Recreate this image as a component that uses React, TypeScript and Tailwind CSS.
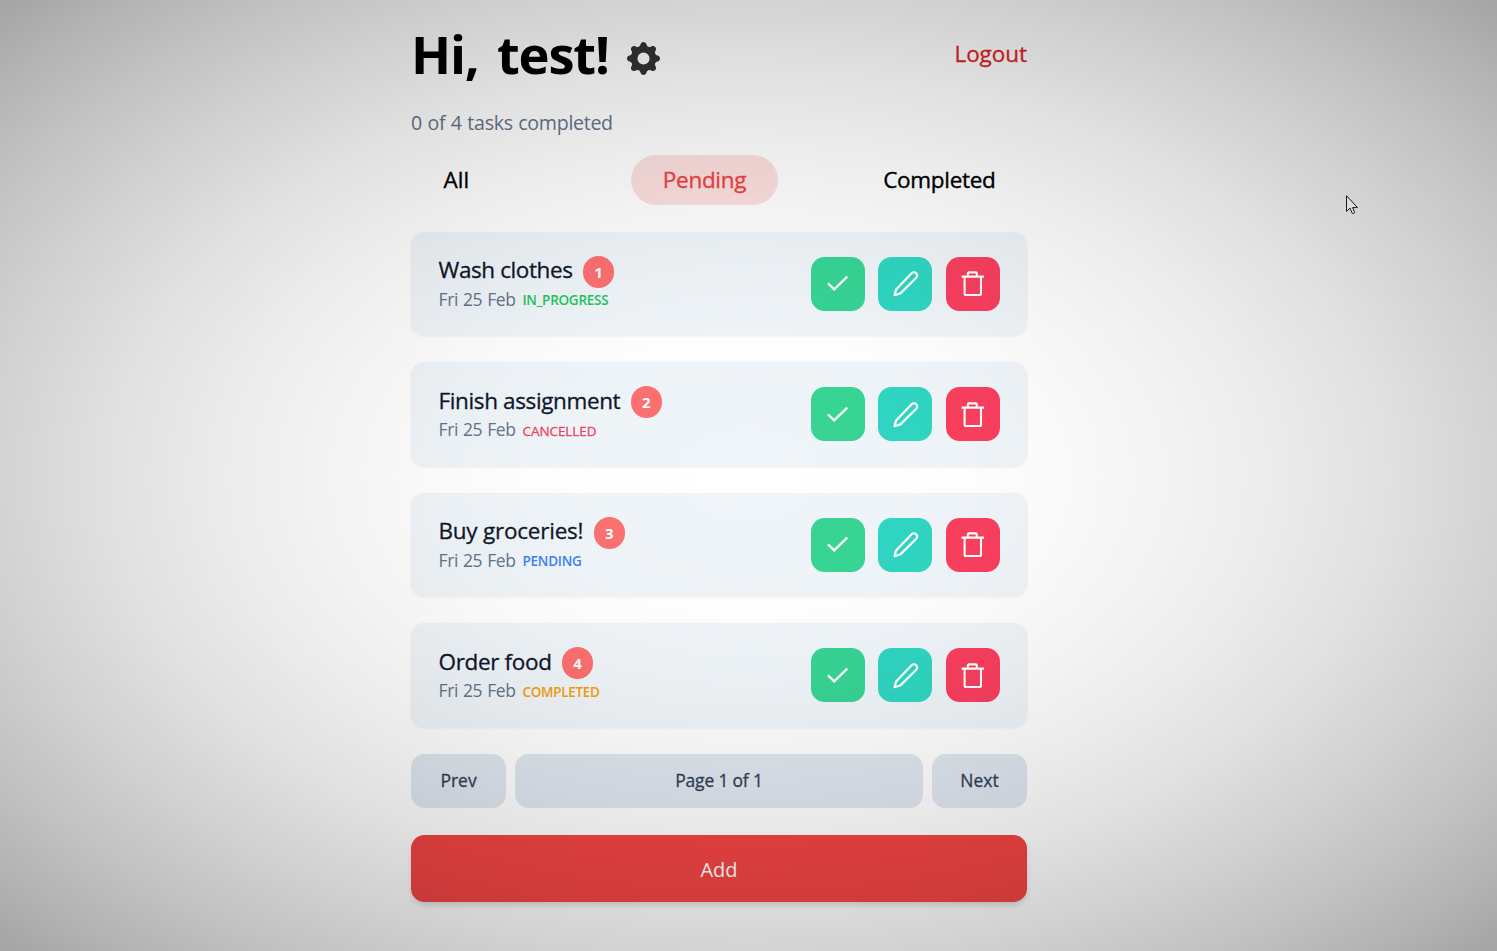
import { BsGearFill } from "react-icons/bs";

type Task = {
  title: string;
  titleClass: string;
  priority: number;
  status: string;
  statusClass: string;
};

const tasks: Task[] = [
  {
    title: "Wash clothes",
    titleClass: "tracking-[-0.4px]",
    priority: 1,
    status: "IN_PROGRESS",
    statusClass: "font-semibold tracking-[-0.27px] text-[#22c55e]",
  },
  {
    title: "Finish assignment",
    titleClass: "tracking-[-0.37px]",
    priority: 2,
    status: "CANCELLED",
    statusClass: "font-medium tracking-[-0.08px] text-[#f43f5e] [-webkit-text-stroke:0.3px]",
  },
  {
    title: "Buy groceries!",
    titleClass: "tracking-[-0.23px]",
    priority: 3,
    status: "PENDING",
    statusClass: "font-semibold tracking-[-0.25px] text-[#3b82f6]",
  },
  {
    title: "Order food",
    titleClass: "tracking-[-0.35px]",
    priority: 4,
    status: "COMPLETED",
    statusClass: "font-semibold tracking-[-0.3px] text-[#f59e0b]",
  },
];

function CheckIcon() {
  return (
    <svg viewBox="0 0 27 27" className="h-[27px] w-[27px]" fill="none" stroke="currentColor" strokeWidth="2.3">
      <path d="M3 13.3 9.2 19.3 22.2 6.7" />
    </svg>
  );
}

function PencilIcon() {
  return (
    <svg viewBox="0 0 27 27" className="h-[27px] w-[27px]" fill="none" stroke="currentColor" strokeWidth="2.2" strokeLinejoin="round">
      <path d="M2.5 25.2 4.1 19.4 19.6 3.2a3.2 3.2 0 0 1 4.6 4.6L8.4 23.4Z" />
    </svg>
  );
}

function TrashIcon() {
  return (
    <svg viewBox="0 0 27 27" className="h-[27px] w-[27px]" fill="none" stroke="currentColor" strokeWidth="2.1" strokeLinejoin="round">
      <path d="M1.6 6.6h22.4M7.8 6.6V3.4a1 1 0 0 1 1-1h7a1 1 0 0 1 1 1v3.2M4.6 6.6v16.8a1.6 1.6 0 0 0 1.6 1.6h13.2a1.6 1.6 0 0 0 1.6-1.6v-16.8" />
    </svg>
  );
}

function TaskCard({ task }: { task: Task }) {
  return (
    <li className="flex h-[103.5px] items-center justify-between rounded-[13.5px] bg-[#f0f5f9] px-[27px] shadow-[0_1px_3px_rgba(0,0,0,0.08)]">
      <div className="flex flex-col pl-[0.5px] whitespace-nowrap">
        <div className="flex h-[32px] items-center">
          <span className={`pb-[3px] text-[22.5px] leading-[32px] font-medium text-[#0f172a] [-webkit-text-stroke:0.3px] ${task.titleClass}`}>
            {task.title}
          </span>
          <span className="ml-[10.5px] flex h-[32px] w-[31px] items-center justify-center rounded-full bg-[#fc7070] pt-px text-[15px] font-bold text-white">
            {task.priority}
          </span>
        </div>
        <div className="flex h-[24px] items-center">
          <span className="w-[78px] pb-[2px] text-[17.5px] tracking-[-0.35px] text-[#64748b] [word-spacing:0.7px]">Fri 25 Feb</span>
          <span className={`ml-[6px] pt-[1.5px] text-[13.5px] ${task.statusClass}`}>{task.status}</span>
        </div>
      </div>
      <div className="flex gap-[13.4px] text-white">
        <button className="flex size-[54px] items-center justify-center rounded-[13.5px] bg-[#37d595]">
          <CheckIcon />
        </button>
        <button className="mr-[0.4px] -ml-[0.4px] flex size-[54px] items-center justify-center rounded-[13.5px] bg-[#2fd6c1]">
          <PencilIcon />
        </button>
        <button className="flex size-[54px] items-center justify-center rounded-[13.5px] bg-[#f93f5e]">
          <TrashIcon />
        </button>
      </div>
    </li>
  );
}

export default function App() {
  return (
    <div className="relative h-[951px] w-full overflow-hidden bg-white font-['Open_Sans',sans-serif]">
      <main className="ml-[411px] w-[616px] pt-[27px]">
        <header className="flex h-[54px] items-center justify-between">
          <div className="flex items-center">
            <h1 className="w-[198px] text-[52.5px] leading-[56px] font-bold tracking-[-1.2px] whitespace-nowrap text-black [word-spacing:6px]">
              Hi, test!
            </h1>
            <BsGearFill className="mt-[9px] ml-[18px] size-[33px] text-[#333]" />
          </div>
          <a className="text-[22.5px] font-medium tracking-[-0.05px] text-[#dc2626] [-webkit-text-stroke:0.3px]">Logout</a>
        </header>

        <p className="mt-[27px] h-[30px] text-[19.6px] leading-[30px] tracking-[-0.3px] text-[#64748b] [word-spacing:0.8px]">
          0 of 4 tasks completed
        </p>

        <nav className="mt-[17px] flex h-[50px] items-center text-[22.5px] font-medium text-black [-webkit-text-stroke:0.35px]">
          <button className="w-[220px] pl-[32.5px] text-left">All</button>
          <button className="h-[50px] w-[147px] rounded-full bg-[#ef4444]/17 tracking-[-0.3px] text-[#ef4444]">
            Pending
          </button>
          <button className="ml-auto pr-[31.5px] tracking-[-0.3px]">Completed</button>
        </nav>

        <ul className="mt-[26.9px] flex flex-col gap-[27px]">
          {tasks.map((task) => (
            <TaskCard key={task.priority} task={task} />
          ))}
        </ul>

        <div className="mt-[27px] flex h-[54px] gap-[9px] text-[17.5px] font-medium text-[#334155] [-webkit-text-stroke:0.3px]">
          <button className="w-[95px] rounded-[13.5px] bg-[#e0e7f0] pb-px">Prev</button>
          <button className="flex-1 rounded-[13.5px] bg-[#e0e7f0] pb-px tracking-[-0.2px]">Page 1 of 1</button>
          <button className="w-[95px] rounded-[13.5px] bg-[#e0e7f0] pb-px">Next</button>
        </div>

        <button className="mt-[27px] flex h-[67px] w-full items-center justify-center rounded-[13.5px] bg-[#f24444] pt-[4px] text-[20px] text-white shadow-[0_4px_6px_-1px_rgba(0,0,0,0.15)]">
          Add
        </button>
      </main>

      <div className="pointer-events-none absolute inset-0 bg-[radial-gradient(ellipse_at_center,rgba(0,0,0,0)_0%,rgba(0,0,0,0.008)_20%,rgba(0,0,0,0.024)_30%,rgba(0,0,0,0.047)_40%,rgba(0,0,0,0.078)_50%,rgba(0,0,0,0.118)_60%,rgba(0,0,0,0.17)_70%,rgba(0,0,0,0.225)_80%,rgba(0,0,0,0.287)_90%,rgba(0,0,0,0.355)_100%)]" />

      <svg viewBox="0 0 13 20" className="pointer-events-none absolute top-[195px] left-[1346px] h-[20px] w-[13px]">
        <path
          d="M.5.7v15.7l3.5-3.3 2.2 5.2c.6.8 2.5.1 2.4-.9l-2-4.8h4.9Z"
          fill="#dedede"
          stroke="#18181b"
          strokeWidth="1"
        />
      </svg>
    </div>
  );
}
